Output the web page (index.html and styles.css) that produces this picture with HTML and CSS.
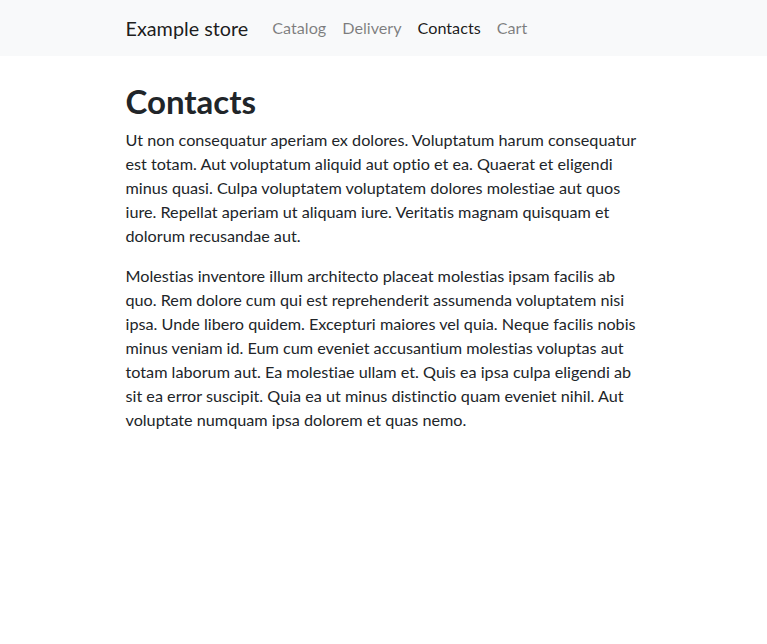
FILE: index.html
```html
<!DOCTYPE html>
<html lang="en">
<head>
<meta charset="utf-8">
<title>Contacts</title>
<link rel="stylesheet" href="styles.css">
</head>
<body>
<nav class="navbar">
  <div class="container navbar-inner">
    <a class="brand" href="#">Example store</a>
    <ul class="nav">
      <li><a class="nav-link" href="#">Catalog</a></li>
      <li><a class="nav-link" href="#">Delivery</a></li>
      <li><a class="nav-link active" href="#">Contacts</a></li>
      <li><a class="nav-link" href="#">Cart</a></li>
    </ul>
  </div>
</nav>
<main class="container content">
  <h1 class="title">Contacts</h1>
  <p class="text">Ut non consequatur aperiam ex dolores. Voluptatum harum consequatur est totam. Aut voluptatum aliquid aut optio et ea. Quaerat et eligendi minus quasi. Culpa voluptatem voluptatem dolores molestiae aut quos iure. Repellat aperiam ut aliquam iure. Veritatis magnam quisquam et dolorum recusandae aut.</p>
  <p class="text">Molestias inventore illum architecto placeat molestias ipsam facilis ab quo. Rem dolore cum qui est reprehenderit assumenda voluptatem nisi ipsa. Unde libero quidem. Excepturi maiores vel quia. Neque facilis nobis minus veniam id. Eum cum eveniet accusantium molestias voluptas aut totam laborum aut. Ea molestiae ullam et. Quis ea ipsa culpa eligendi ab sit ea error suscipit. Quia ea ut minus distinctio quam eveniet nihil. Aut voluptate numquam ipsa dolorem et quas nemo.</p>
</main>
</body>
</html>
```
FILE: styles.css
```css
*{box-sizing:border-box;}
body{
  margin:0;
  font-family:Lato,"Liberation Sans",sans-serif;
  font-size:16.2px;
  line-height:24px;
  color:#212529;
  background:#fff;
  font-variant-ligatures:none;
}
.container{
  width:100%;
  max-width:546px;
  margin:0 auto;
  padding:0 15px;
}
.navbar{
  background:#f8f9fa;
  height:56px;
}
.navbar-inner{
  height:56px;
  display:flex;
  align-items:center;
}
.brand{
  font-size:19.8px;
  line-height:30px;
  color:rgba(0,0,0,.9);
  text-decoration:none;
  margin-right:16px;
}
.nav{
  display:flex;
  list-style:none;
  margin:0;
  padding:0;
}
.nav-link{
  display:block;
  padding:8px;
  color:rgba(0,0,0,.5);
  text-decoration:none;
  font-size:16.2px;
  line-height:24px;
}
.nav-link.active{color:rgba(0,0,0,.9);}
.content{padding-top:26px;}
.title{
  margin:0 0 8px;
  font-size:33px;
  font-weight:700;
  line-height:38px;
}
.text{
  margin:0 0 16px;
}
```
